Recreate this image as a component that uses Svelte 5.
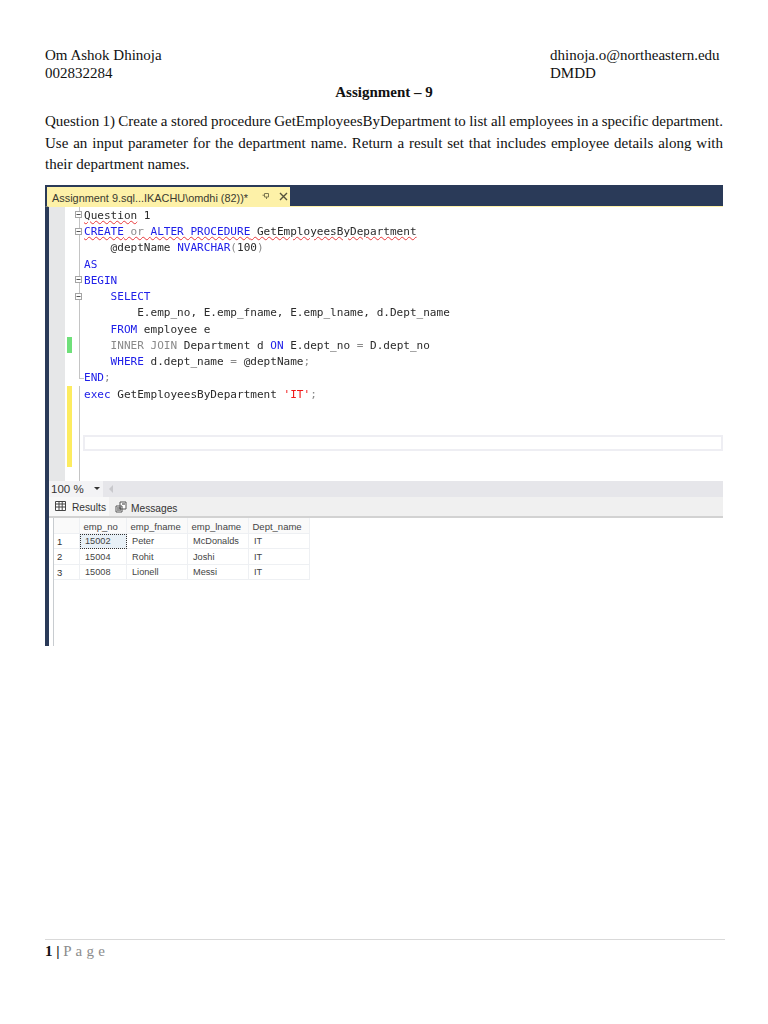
<script>
	const rows = [
		{ fold: 'box', code: [['t', 'Question', 'wavy'], ['t', ' 1']] },
		{ fold: 'box', code: [['k', 'CREATE', 'wavy'], ['g', ' or ', 'wavy'], ['k', 'ALTER PROCEDURE', 'wavy'], ['t', ' GetEmployeesByDepartment', 'wavy']] },
		{ fold: 'line', code: [['t', '    @deptName '], ['k', 'NVARCHAR'], ['g', '('], ['t', '100'], ['g', ')']] },
		{ fold: 'line', code: [['k', 'AS']] },
		{ fold: 'box', code: [['k', 'BEGIN']] },
		{ fold: 'box', code: [['k', '    SELECT']] },
		{ fold: 'line', code: [['t', '        E.emp_no, E.emp_fname, E.emp_lname, d.Dept_name']] },
		{ fold: 'line', code: [['k', '    FROM'], ['t', ' employee e']] },
		{ fold: 'line', mark: 'green', code: [['g', '    INNER JOIN'], ['t', ' Department d '], ['k', 'ON'], ['t', ' E.dept_no '], ['g', '='], ['t', ' D.dept_no']] },
		{ fold: 'line', code: [['k', '    WHERE'], ['t', ' d.dept_name '], ['g', '='], ['t', ' @deptName'], ['g', ';']] },
		{ fold: 'end', code: [['k', 'END'], ['g', ';']] },
		{ fold: 'line', mark: 'yellow', code: [['k', 'exec'], ['t', ' GetEmployeesByDepartment '], ['s', "'IT'"], ['g', ';']] },
		{ fold: 'line', mark: 'yellow', code: [] },
		{ fold: 'line', mark: 'yellow', code: [] },
		{ fold: 'line', mark: 'yellow', current: true, code: [] },
		{ fold: 'line', mark: 'yellow', code: [] },
		{ fold: 'line', code: [] }
	];

	const results = [
		['1', '15002', 'Peter', 'McDonalds', 'IT'],
		['2', '15004', 'Rohit', 'Joshi', 'IT'],
		['3', '15008', 'Lionell', 'Messi', 'IT']
	];
</script>

<div class="page">
	<header class="head">
		<div>Om Ashok Dhinoja<br />002832284</div>
		<div class="right">dhinoja.o@northeastern.edu<br />DMDD</div>
	</header>
	<h1>Assignment – 9</h1>
	<p class="question">
		<span class="ln tight">Question 1) Create a stored procedure GetEmployeesByDepartment to list all employees in a specific department.</span>
		<span class="ln">Use an input parameter for the department name. Return a result set that includes employee details along with</span>
		<span class="last">their department names.</span>
	</p>

	<div class="shot">
		<div class="tabbar">
			<div class="doctab">
				<span class="title">Assignment 9.sql...IKACHU\omdhi (82))*</span>
				<svg class="pin" width="8" height="8" viewBox="0 0 8 8"><path d="M2.500 1.500h4v3.500h-4zM.5 3.200h2M4.500 5v2" fill="none" stroke="#7d7850" stroke-width="1" /></svg>
				<svg class="close" width="9" height="9" viewBox="0 0 9 9"><path d="M1 1l7 7M8 1l-7 7" fill="none" stroke="#55523c" stroke-width="1.400" /></svg>
			</div>
		</div>
		<div class="body">
			<div class="editor">
				{#each rows as row}
					<div class="row">
						<div class="margin"></div>
						<div class="mark {row.mark || ''}"></div>
						<div class="fold {row.fold}">
							{#if row.fold === 'box'}
								<svg width="7" height="7" viewBox="0 0 7 7"><rect x="0.5" y="0.5" width="6" height="6" fill="#fff" stroke="#a5a5a5" /><path d="M1.500 3.500h4" stroke="#555" /></svg>
							{/if}
						</div>
						<div class="code" class:current={row.current}>
							{#each row.code as part}<span class="{part[0]} {part[2] || ''}">{part[1]}</span>{/each}
						</div>
					</div>
				{/each}
			</div>

			<div class="zoombar">
				<div class="zoom">100 %<span class="caret"></span></div>
				<span class="scrollarrow"></span>
			</div>

			<div class="tabs">
				<div class="tab active">
					<svg width="11" height="10" viewBox="0 0 11 10"><path d="M.5.5h10v9H.5zM.5 3h10M.5 6h10M4 .5v9M7.200.5v9" fill="#fff" stroke="#444" /></svg>
					<span>Results</span>
				</div>
				<div class="tab">
					<svg width="12" height="12" viewBox="0 0 12 12"><path d="M5 1h6v7H5zM1 5h6v6H1z" fill="#fff" stroke="#555" /><path d="M2 7h4M2 9h4M7 3h3" stroke="#333" /></svg>
					<span>Messages</span>
				</div>
			</div>

			<div class="results">
				<div class="grid">
					<div class="cell hd"></div>
					<div class="cell hd">emp_no</div>
					<div class="cell hd">emp_fname</div>
					<div class="cell hd">emp_lname</div>
					<div class="cell hd">Dept_name</div>
					{#each results as r, i}
						<div class="cell num">{r[0]}</div>
						<div class="cell" class:selected={i === 0}>{r[1]}</div>
						<div class="cell">{r[2]}</div>
						<div class="cell">{r[3]}</div>
						<div class="cell">{r[4]}</div>
					{/each}
				</div>
			</div>
		</div>
	</div>

	<footer class="foot"><b>1</b> <b class="bar">|</b> <span>P a g e</span></footer>
</div>

<style>
	:global(body) {
		background: #fff;
	}

	.page {
		box-sizing: border-box;
		height: 1024px;
		padding: 46px 45px 0;
		font-family: "Liberation Serif", serif;
		font-size: 15px;
		color: #111;
		position: relative;
	}

	.head {
		display: flex;
		line-height: 18px;
	}

	.head .right {
		margin-left: auto;
		width: 173px;
	}

	h1 {
		margin: 1px 0 0;
		font-size: 15px;
		line-height: 18px;
		text-align: center;
	}

	.question {
		margin: 10px 0 0;
		line-height: 21.6px;
	}

	.question span {
		display: block;
		white-space: nowrap;
	}

	.question .ln {
		white-space: normal;
		text-align: justify;
		text-align-last: justify;
	}

	.question .tight {
		word-spacing: -1px;
	}

	.shot {
		margin: 9px 0 0;
		height: 461px;
		display: flex;
		flex-direction: column;
		filter: blur(0.35px);
		overflow: hidden;
	}

	.tabbar {
		flex: none;
		height: 21px;
		padding: 2px 0 0 2px;
		box-sizing: border-box;
		background: #2a3a58;
		display: flex;
	}

	.doctab {
		width: 243px;
		background: #fdf1a8;
		display: flex;
		align-items: center;
		padding-left: 5px;
		box-sizing: border-box;
		font: 10.9px "Liberation Sans", sans-serif;
		color: #3a3a30;
	}

	.title {
		width: 210px;
		white-space: nowrap;
		padding-top: 3px;
	}

	.close {
		margin-left: 9px;
	}

	.body {
		flex: 1;
		border-top: 1px solid #fdf1a8;
		border-left: 4px solid #2a3a58;
		display: flex;
		flex-direction: column;
		min-height: 0;
	}

	.editor {
		flex: none;
		height: 274px;
		overflow: hidden;
	}

	.row {
		height: 16.27px;
		display: flex;
	}

	.margin {
		width: 16px;
		background: #e6e7e8;
	}

	.mark {
		width: 5px;
		margin-left: 2px;
	}

	.mark.green {
		background: #6fe07a;
	}

	.mark.yellow {
		background: #fdec60;
	}

	.fold {
		width: 9px;
		margin-left: 3px;
		position: relative;
		display: flex;
		align-items: center;
		box-sizing: border-box;
	}

	.fold svg {
		display: block;
		position: relative;
		z-index: 1;
	}

	.fold.line::before,
	.fold.end::before,
	.fold.box::before {
		content: "";
		position: absolute;
		left: 4px;
		top: 0;
		bottom: 0;
		width: 1px;
		background: #c4c4c4;
	}

	.fold.end::before {
		bottom: 50%;
	}

	.fold.end::after {
		content: "";
		position: absolute;
		left: 4px;
		top: 50%;
		width: 5px;
		height: 1px;
		background: #c4c4c4;
	}

	.code {
		flex: 1;
		font: 11.06px/18.3px "DejaVu Sans Mono", monospace;
		white-space: pre;
		box-sizing: border-box;
		min-width: 0;
	}

	.code.current {
		border: 2px solid #eeeef3;
		height: 16px;
		margin-left: -1px;
	}

	.t {
		color: #2b2b2b;
	}

	.k {
		color: #2020e8;
	}

	.g {
		color: #8a8a8a;
	}

	.s {
		color: #f01818;
	}

	.wavy {
		text-decoration: underline wavy #e8383a 1px;
		text-underline-offset: 1px;
	}

	.zoombar {
		flex: none;
		height: 16px;
		background: #e6e6ea;
		display: flex;
		align-items: center;
		gap: 6px;
	}

	.zoom {
		width: 54px;
		height: 100%;
		background: #f3f3f5;
		padding-left: 2px;
		box-sizing: border-box;
		display: flex;
		align-items: center;
		justify-content: space-between;
		font: 11.5px "Liberation Sans", sans-serif;
		color: #333;
	}

	.caret {
		border-left: 3px solid transparent;
		border-right: 3px solid transparent;
		border-top: 3px solid #333;
		margin-right: 3px;
	}

	.scrollarrow {
		border-top: 4px solid transparent;
		border-bottom: 4px solid transparent;
		border-right: 4px solid #c8c8cc;
	}

	.tabs {
		flex: none;
		height: 21px;
		background: #f0f0f0;
		border-bottom: 2px solid #d2d2d2;
		box-sizing: border-box;
		display: flex;
		gap: 2px;
		font: 10.2px "Liberation Sans", sans-serif;
		color: #333;
	}

	.tab {
		display: flex;
		align-items: center;
		gap: 4px;
		padding: 2px 3px 0 4px;
	}

	.tab span {
		padding-top: 2px;
	}

	.tab.active {
		background: #f8f8f8;
		padding: 0 3px 0 6px;
		gap: 6px;
	}

	.results {
		flex: 1;
		margin-left: 4px;
		border-left: 1px solid #c8ccd0;
		background: #fff;
	}

	.grid {
		display: grid;
		grid-template-columns: 26px 47px 61px 61px 61px;
		grid-template-rows: 16px 15px 16px 15px;
		width: max-content;
		font: 9.2px "Liberation Sans", sans-serif;
		color: #444;
	}

	.cell {
		display: flex;
		align-items: center;
		padding: 1px 0 0 5px;
		border-right: 1px solid #eef0f3;
		border-bottom: 1px solid #eef0f3;
		box-sizing: border-box;
	}

	.hd {
		background: #fafafa;
		font-size: 9.5px;
		padding: 3px 0 0 3.500px;
	}

	.num {
		background: #fff;
		font-size: 9.5px;
		color: #333;
		padding-left: 3px;
	}

	.selected {
		background: #e8f0f6;
		outline: 1px dotted #333;
		outline-offset: -1px;
	}

	.foot {
		position: absolute;
		left: 45px;
		right: 43px;
		top: 939px;
		border-top: 1px solid #d9d9d9;
		padding-top: 2px;
		line-height: 18px;
	}

	.foot span {
		color: #8c8c8c;
		letter-spacing: 0.3px;
	}
</style>
